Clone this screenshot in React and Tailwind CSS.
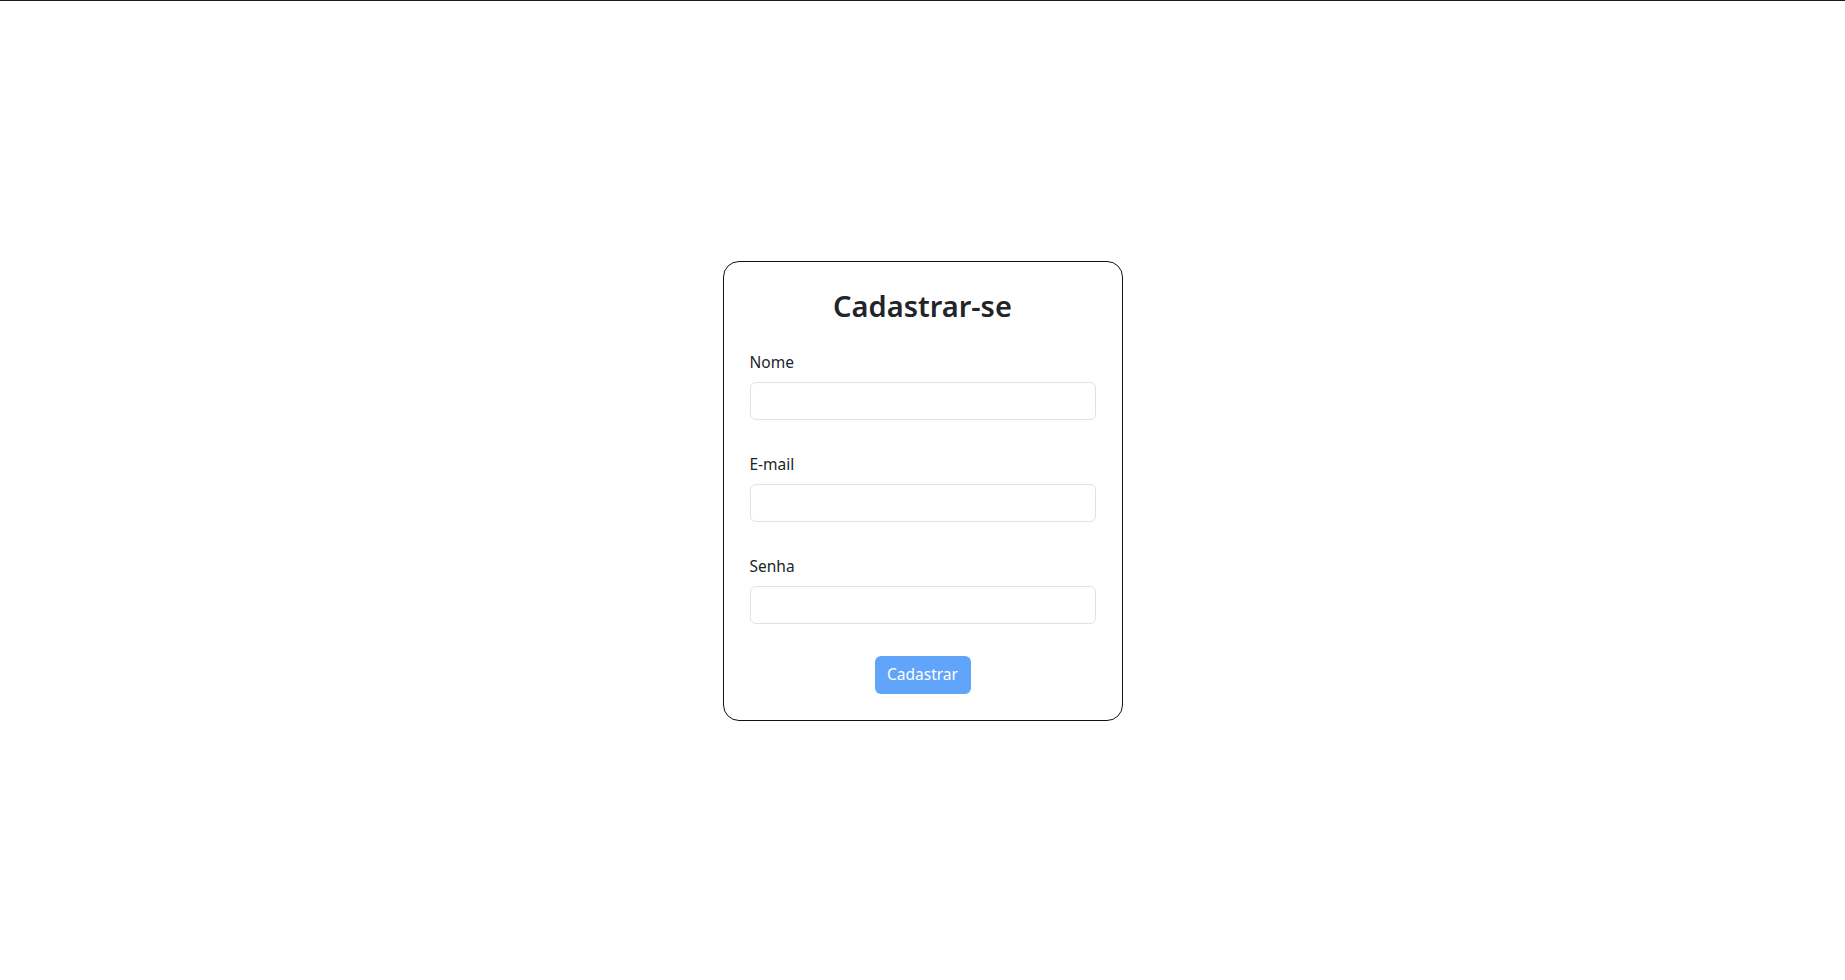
export default function App() {
  const fields = [
    { id: "nome", label: "Nome", type: "text" },
    { id: "email", label: "E-mail", type: "email" },
    { id: "senha", label: "Senha", type: "password" }
  ]

  return (
    <div className="h-screen w-full border-t border-[#1a1a1a] bg-white flex items-center justify-center font-['Noto_Sans',sans-serif] text-[#212529]">
      <form
        className="w-[400px] rounded-[16px] border border-[#111] px-[26px] pt-[26px] pb-[26px] flex flex-col"
        onSubmit={(e) => e.preventDefault()}
      >
        <h1 className="text-[29px] leading-9 font-semibold text-center mb-[26px]">Cadastrar-se</h1>

        <div className="flex flex-col gap-8">
          {fields.map((f) => (
            <div key={f.id} className="flex flex-col">
              <label htmlFor={f.id} className="text-[15.5px] leading-6 mb-2">
                {f.label}
              </label>
              <input
                id={f.id}
                type={f.type}
                className="h-[38px] w-full rounded-[6px] border border-[#dee2e6] px-3 outline-none"
              />
            </div>
          ))}
        </div>

        <div className="flex justify-center mt-8">
          <button
            type="submit"
            className="h-[38px] w-[96px] rounded-[6px] bg-[#60a5fa] text-white text-[15.5px]"
          >
            Cadastrar
          </button>
        </div>
      </form>
    </div>
  )
}
